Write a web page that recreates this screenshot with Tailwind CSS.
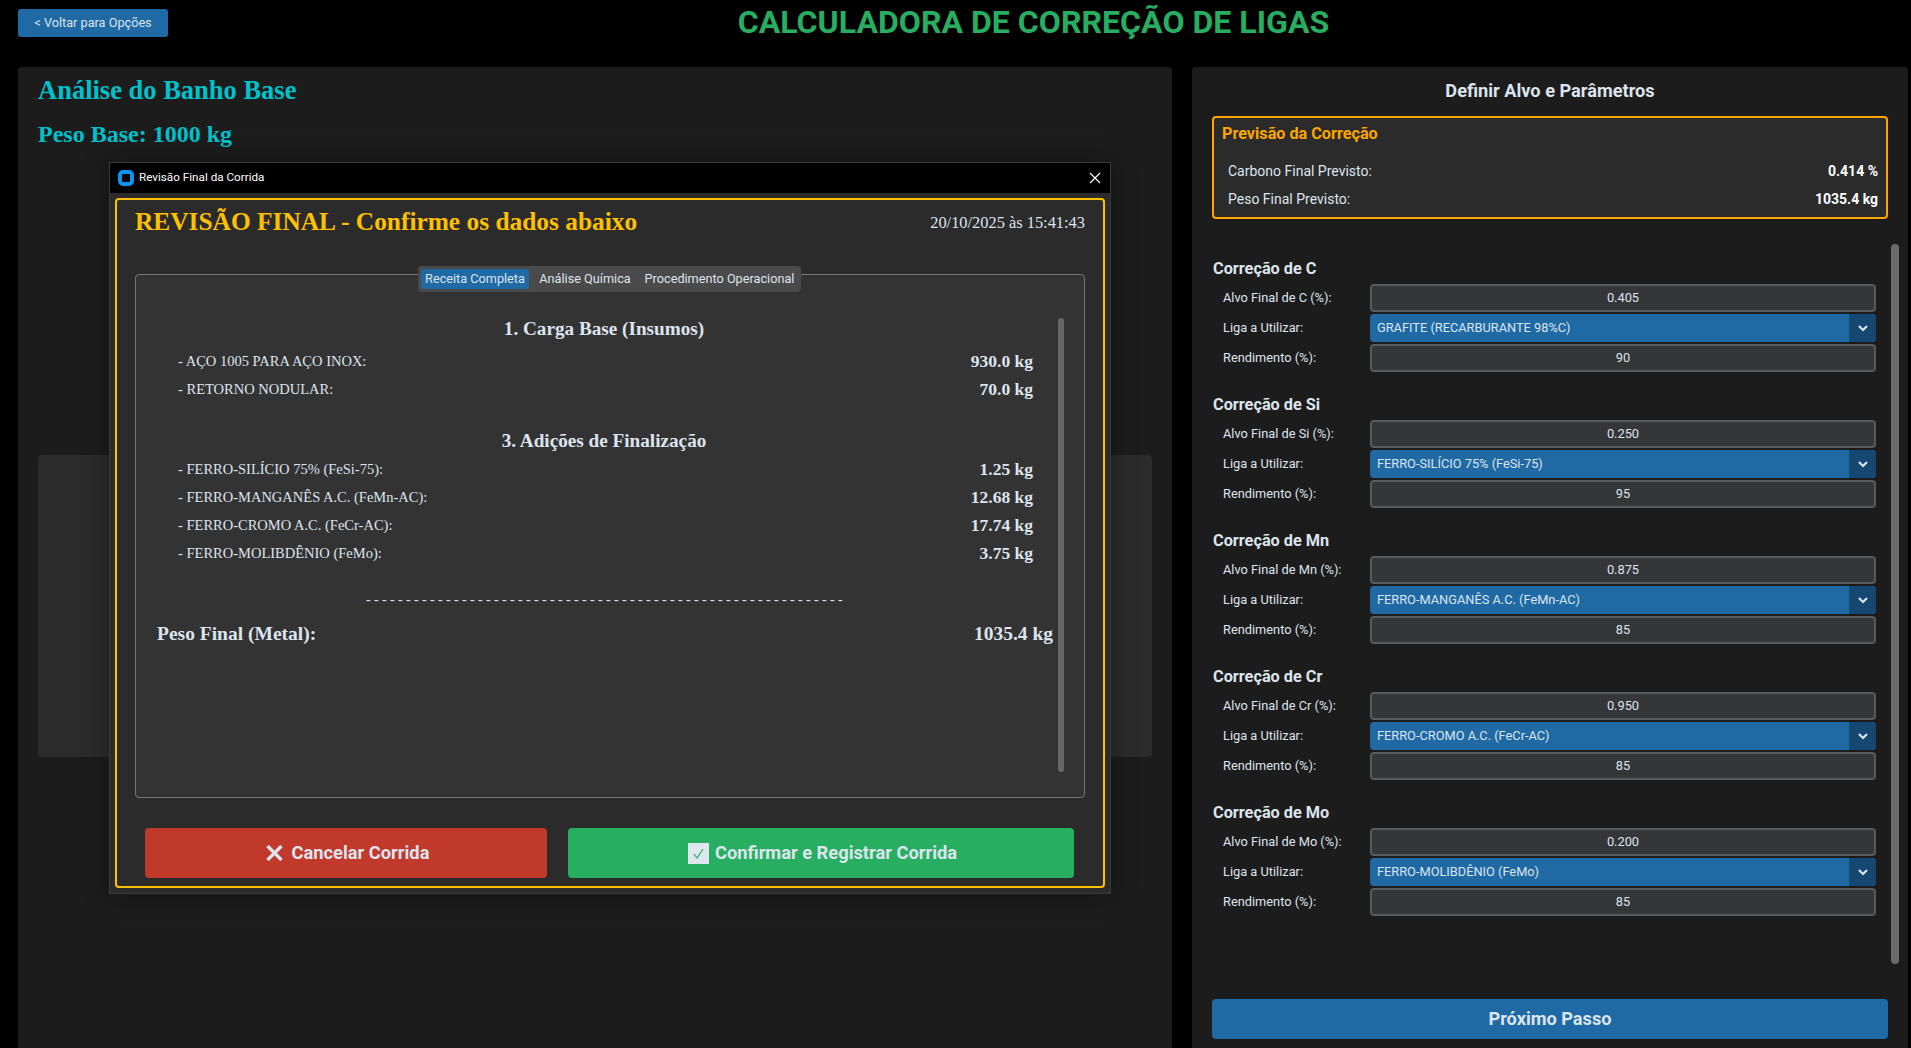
<!DOCTYPE html>
<html lang="en">
<head>
  <meta charset="UTF-8">
  <meta name="viewport" content="width=device-width, initial-scale=1.0">
  <title>Calculadora de Correção de Ligas</title>
  <script src="https://cdn.jsdelivr.net/npm/@tailwindcss/browser@4"></script>
</head>
<body class="bg-black text-[#dce4ee] font-['Roboto',sans-serif] h-[1048px] overflow-hidden relative">

  <!-- Top bar -->
  <div class="flex items-start h-[67px] pl-[18px] pt-[9px]">
    <button class="w-[150px] h-[28px] bg-[#1f6aa5] rounded-[3px] text-[12.7px] text-[#dce4ee]">&lt; Voltar para Opções</button>
    <h1 class="flex-1 text-center pr-[12px] -mt-[5px] text-[32.1px] leading-[36px] font-bold text-[#27ae60]">CALCULADORA DE CORREÇÃO DE LIGAS</h1>
  </div>

  <div class="flex h-[981px] pl-[18px] pr-[3px] gap-[20px]">
    <!-- Left panel -->
    <div class="w-[1154px] bg-[#1c1c1c] rounded-t-[4px] pl-[20px] pr-[20px] font-['Liberation_Serif',serif] font-bold text-[#00c2cb]">
      <h2 class="text-[26.5px] leading-[30px] pt-[8px]">Análise do Banho Base</h2>
      <p class="text-[24px] leading-[28px] mt-[15px]">Peso Base: 1000 kg</p>
      <div class="h-[302px] mt-[307px] bg-[#2b2b2b] rounded-[4px]"></div>
    </div>

    <!-- Right panel -->
    <div class="flex-1 bg-[#1c1c1c] rounded-t-[4px] pl-[20px] pr-[20px] relative">
      <h2 class="text-center text-[18.2px] leading-[24px] font-bold pt-[12px]">Definir Alvo e Parâmetros</h2>

      <div class="mt-[13px] h-[103px] border-2 border-[#ffa500] rounded-[4px] bg-[#2b2b2b] pl-[8px] pr-[8px] pt-[6px] text-[14px]">
        <h3 class="text-[16.2px] leading-[20px] font-bold text-[#ffa500]">Previsão da Correção</h3>
        <div class="flex justify-between pl-[6px] mt-[17px] leading-[20px]"><span>Carbono Final Previsto:</span><b class="text-white">0.414 %</b></div>
        <div class="flex justify-between pl-[6px] mt-[8px] leading-[20px]"><span>Peso Final Previsto:</span><b class="text-white">1035.4 kg</b></div>
      </div>

      <div class="mt-[39px] flex flex-col gap-[22px] text-[12.8px] pl-[1px]">
        <section>
          <h3 class="text-[16.3px] leading-[22px] font-bold">Correção de C</h3>
          <div class="flex flex-col gap-[2px] pl-[10px] pr-[12px] mt-[4px]">
            <div class="flex items-center"><label class="w-[147px]">Alvo Final de C (%):</label><div class="flex-1 h-[28px] bg-[#343638] border-2 border-[#565b5e] rounded-[4px] text-center leading-[24px]">0.405</div></div>
            <div class="flex items-center"><label class="w-[147px]">Liga a Utilizar:</label><div class="flex-1 h-[28px] bg-[#1f6aa5] rounded-[4px] flex items-center overflow-hidden"><span class="flex-1 pl-[7px]">GRAFITE (RECARBURANTE 98%C)</span><span class="w-[27px] h-full bg-[#144870] flex items-center justify-center"><svg width="10" height="7" viewBox="0 0 10 7" fill="none" stroke="#dce4ee" stroke-width="2.2"><path d="M1 1l4 4 4-4"/></svg></span></div></div>
            <div class="flex items-center"><label class="w-[147px]">Rendimento (%):</label><div class="flex-1 h-[28px] bg-[#343638] border-2 border-[#565b5e] rounded-[4px] text-center leading-[24px]">90</div></div>
          </div>
        </section>
        <section>
          <h3 class="text-[16.3px] leading-[22px] font-bold">Correção de Si</h3>
          <div class="flex flex-col gap-[2px] pl-[10px] pr-[12px] mt-[4px]">
            <div class="flex items-center"><label class="w-[147px]">Alvo Final de Si (%):</label><div class="flex-1 h-[28px] bg-[#343638] border-2 border-[#565b5e] rounded-[4px] text-center leading-[24px]">0.250</div></div>
            <div class="flex items-center"><label class="w-[147px]">Liga a Utilizar:</label><div class="flex-1 h-[28px] bg-[#1f6aa5] rounded-[4px] flex items-center overflow-hidden"><span class="flex-1 pl-[7px]">FERRO-SILÍCIO 75% (FeSi-75)</span><span class="w-[27px] h-full bg-[#144870] flex items-center justify-center"><svg width="10" height="7" viewBox="0 0 10 7" fill="none" stroke="#dce4ee" stroke-width="2.2"><path d="M1 1l4 4 4-4"/></svg></span></div></div>
            <div class="flex items-center"><label class="w-[147px]">Rendimento (%):</label><div class="flex-1 h-[28px] bg-[#343638] border-2 border-[#565b5e] rounded-[4px] text-center leading-[24px]">95</div></div>
          </div>
        </section>
        <section>
          <h3 class="text-[16.3px] leading-[22px] font-bold">Correção de Mn</h3>
          <div class="flex flex-col gap-[2px] pl-[10px] pr-[12px] mt-[4px]">
            <div class="flex items-center"><label class="w-[147px]">Alvo Final de Mn (%):</label><div class="flex-1 h-[28px] bg-[#343638] border-2 border-[#565b5e] rounded-[4px] text-center leading-[24px]">0.875</div></div>
            <div class="flex items-center"><label class="w-[147px]">Liga a Utilizar:</label><div class="flex-1 h-[28px] bg-[#1f6aa5] rounded-[4px] flex items-center overflow-hidden"><span class="flex-1 pl-[7px]">FERRO-MANGANÊS A.C. (FeMn-AC)</span><span class="w-[27px] h-full bg-[#144870] flex items-center justify-center"><svg width="10" height="7" viewBox="0 0 10 7" fill="none" stroke="#dce4ee" stroke-width="2.2"><path d="M1 1l4 4 4-4"/></svg></span></div></div>
            <div class="flex items-center"><label class="w-[147px]">Rendimento (%):</label><div class="flex-1 h-[28px] bg-[#343638] border-2 border-[#565b5e] rounded-[4px] text-center leading-[24px]">85</div></div>
          </div>
        </section>
        <section>
          <h3 class="text-[16.3px] leading-[22px] font-bold">Correção de Cr</h3>
          <div class="flex flex-col gap-[2px] pl-[10px] pr-[12px] mt-[4px]">
            <div class="flex items-center"><label class="w-[147px]">Alvo Final de Cr (%):</label><div class="flex-1 h-[28px] bg-[#343638] border-2 border-[#565b5e] rounded-[4px] text-center leading-[24px]">0.950</div></div>
            <div class="flex items-center"><label class="w-[147px]">Liga a Utilizar:</label><div class="flex-1 h-[28px] bg-[#1f6aa5] rounded-[4px] flex items-center overflow-hidden"><span class="flex-1 pl-[7px]">FERRO-CROMO A.C. (FeCr-AC)</span><span class="w-[27px] h-full bg-[#144870] flex items-center justify-center"><svg width="10" height="7" viewBox="0 0 10 7" fill="none" stroke="#dce4ee" stroke-width="2.2"><path d="M1 1l4 4 4-4"/></svg></span></div></div>
            <div class="flex items-center"><label class="w-[147px]">Rendimento (%):</label><div class="flex-1 h-[28px] bg-[#343638] border-2 border-[#565b5e] rounded-[4px] text-center leading-[24px]">85</div></div>
          </div>
        </section>
        <section>
          <h3 class="text-[16.3px] leading-[22px] font-bold">Correção de Mo</h3>
          <div class="flex flex-col gap-[2px] pl-[10px] pr-[12px] mt-[4px]">
            <div class="flex items-center"><label class="w-[147px]">Alvo Final de Mo (%):</label><div class="flex-1 h-[28px] bg-[#343638] border-2 border-[#565b5e] rounded-[4px] text-center leading-[24px]">0.200</div></div>
            <div class="flex items-center"><label class="w-[147px]">Liga a Utilizar:</label><div class="flex-1 h-[28px] bg-[#1f6aa5] rounded-[4px] flex items-center overflow-hidden"><span class="flex-1 pl-[7px]">FERRO-MOLIBDÊNIO (FeMo)</span><span class="w-[27px] h-full bg-[#144870] flex items-center justify-center"><svg width="10" height="7" viewBox="0 0 10 7" fill="none" stroke="#dce4ee" stroke-width="2.2"><path d="M1 1l4 4 4-4"/></svg></span></div></div>
            <div class="flex items-center"><label class="w-[147px]">Rendimento (%):</label><div class="flex-1 h-[28px] bg-[#343638] border-2 border-[#565b5e] rounded-[4px] text-center leading-[24px]">85</div></div>
          </div>
        </section>
      </div>

      <!-- scrollbar -->
      <div class="absolute left-[699px] top-[177px] w-[8px] h-[720px] bg-[#6b6b6b] rounded-[4px]"></div>

      <button class="absolute left-[20px] right-[20px] top-[932px] h-[40px] bg-[#1f6aa5] rounded-[4px] text-[18.2px] font-bold text-[#dce4ee]">Próximo Passo</button>
    </div>
  </div>

  <!-- Dialog window -->
  <div class="absolute left-[109px] top-[162px] w-[1002px] h-[732px] bg-[#2b2b2b] border border-[#3a3a3a] shadow-[0_0_24px_rgba(0,0,0,0.35)] flex flex-col">
    <div class="h-[30px] bg-black flex items-center pl-[8px] pr-[9px] text-[11.7px] text-white shrink-0">
      <span class="w-[16px] h-[16px] rounded-[5px] border-[4px] border-[#0a95f5] bg-black mr-[5px]"></span>
      <span class="flex-1">Revisão Final da Corrida</span>
      <svg width="12" height="12" viewBox="0 0 12 12" stroke="#fff" stroke-width="1.2" fill="none"><path d="M1 1l10 10M11 1L1 11"/></svg>
    </div>
    <div class="relative mx-[5px] mt-[5px] h-[690px] border-2 border-[#ffc000] rounded-[4px] bg-[#2b2b2b] font-['Liberation_Serif',serif]">
      <div class="flex justify-between items-start pl-[18px] pr-[18px] pt-[6px]">
        <h2 class="text-[25.4px] leading-[30px] font-bold text-[#ffc000]">REVISÃO FINAL - Confirme os dados abaixo</h2>
        <span class="text-[16.4px] leading-[24px] mt-[5px] text-[#dce4ee]">20/10/2025 às 15:41:43</span>
      </div>

      <!-- Tabs + frame -->
      <div class="relative mx-[18px] mt-[38px] h-[524px] bg-[#333333] border border-[#777] rounded-[4px]">
        <div class="absolute left-[282px] -top-[9px] h-[26px] w-[383px] bg-[#4a4a4a] rounded-[4px] flex items-center px-[3px] font-['Roboto',sans-serif] text-[12.7px]">
          <span class="w-[108px] h-[20px] bg-[#1f6aa5] rounded-[3px] text-center leading-[20px]">Receita Completa</span>
          <span class="w-[112px] text-center">Análise Química</span>
          <span class="flex-1 text-center">Procedimento Operacional</span>
        </div>

        <div class="absolute left-[21px] top-[42px] w-[896px] text-[#dce4ee]">
          <h3 class="text-center text-[19.2px] leading-[24px] font-bold pr-[2px]">1. Carga Base (Insumos)</h3>
          <div class="flex justify-between pl-[21px] pr-[20px] mt-[6px] text-[14.5px] leading-[28px]"><span>- AÇO 1005 PARA AÇO INOX:</span><b class="text-[17.5px]">930.0 kg</b></div>
          <div class="flex justify-between pl-[21px] pr-[20px] text-[14.5px] leading-[28px]"><span>- RETORNO NODULAR:</span><b class="text-[17.5px]">70.0 kg</b></div>
          <h3 class="text-center text-[19.2px] leading-[24px] font-bold mt-[26px] pr-[2px]">3. Adições de Finalização</h3>
          <div class="flex justify-between pl-[21px] pr-[20px] mt-[2px] text-[14.5px] leading-[28px]"><span>- FERRO-SILÍCIO 75% (FeSi-75):</span><b class="text-[17.5px]">1.25 kg</b></div>
          <div class="flex justify-between pl-[21px] pr-[20px] text-[14.5px] leading-[28px]"><span>- FERRO-MANGANÊS A.C. (FeMn-AC):</span><b class="text-[17.5px]">12.68 kg</b></div>
          <div class="flex justify-between pl-[21px] pr-[20px] text-[14.5px] leading-[28px]"><span>- FERRO-CROMO A.C. (FeCr-AC):</span><b class="text-[17.5px]">17.74 kg</b></div>
          <div class="flex justify-between pl-[21px] pr-[20px] text-[14.5px] leading-[28px]"><span>- FERRO-MOLIBDÊNIO (FeMo):</span><b class="text-[17.5px]">3.75 kg</b></div>
          <p class="text-center mt-[23px] pl-[2px] text-[14px] leading-[20px] tracking-[3.34px] whitespace-nowrap">------------------------------------------------------------</p>
          <div class="flex justify-between mt-[10px] text-[19.5px] leading-[28px] font-bold"><span>Peso Final (Metal):</span><span>1035.4 kg</span></div>
        </div>

        <!-- inner scrollbar -->
        <div class="absolute left-[922px] top-[43px] w-[6px] h-[454px] bg-[#666] rounded-[4px]"></div>
      </div>

      <!-- Actions -->
      <div class="flex gap-[21px] pl-[28px] pr-[29px] mt-[30px] font-['Roboto',sans-serif] text-[18.3px] font-bold text-[#dce4ee]">
        <button class="w-[402px] h-[50px] pl-[3px] bg-[#c0392b] rounded-[4px] flex items-center justify-center gap-[9px]"><svg width="17" height="16" viewBox="0 0 17 16" stroke="#dce4ee" stroke-width="3.4" fill="none"><path d="M1.5 1l14 14M15.5 1l-14 14"/></svg>Cancelar Corrida</button>
        <button class="flex-1 h-[50px] pl-[3px] bg-[#27ae60] rounded-[4px] flex items-center justify-center gap-[6px]"><span class="w-[21px] h-[21px] bg-[#dfe6ef] flex items-center justify-center"><svg width="13" height="13" viewBox="0 0 13 13" stroke="#27ae60" stroke-width="1.2" fill="none"><path d="M2 7l3 4 6-9"/></svg></span>Confirmar e Registrar Corrida</button>
      </div>
    </div>
  </div>
</body>
</html>
